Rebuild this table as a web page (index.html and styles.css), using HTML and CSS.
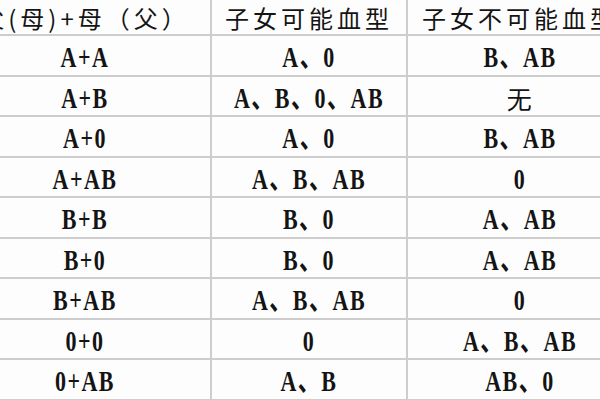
FILE: index.html
```html
<!DOCTYPE html>
<html lang="zh">
<head>
<meta charset="utf-8">
<title>血型遗传表</title>
<link rel="stylesheet" href="styles.css">
</head>
<body>
<div class="table">
  <div class="cell head">父(母)+母（父）</div>
  <div class="cell head">子女可能血型</div>
  <div class="cell head">子女不可能血型</div>

  <div class="cell"><span>A+A</span></div><div class="cell"><span>A、0</span></div><div class="cell"><span>B、AB</span></div>
  <div class="cell"><span>A+B</span></div><div class="cell"><span>A、B、0、AB</span></div><div class="cell cjk">无</div>
  <div class="cell"><span>A+0</span></div><div class="cell"><span>A、0</span></div><div class="cell"><span>B、AB</span></div>
  <div class="cell"><span>A+AB</span></div><div class="cell"><span>A、B、AB</span></div><div class="cell"><span>0</span></div>
  <div class="cell"><span>B+B</span></div><div class="cell"><span>B、0</span></div><div class="cell"><span>A、AB</span></div>
  <div class="cell"><span>B+0</span></div><div class="cell"><span>B、0</span></div><div class="cell"><span>A、AB</span></div>
  <div class="cell"><span>B+AB</span></div><div class="cell"><span>A、B、AB</span></div><div class="cell"><span>0</span></div>
  <div class="cell"><span>0+0</span></div><div class="cell"><span>0</span></div><div class="cell"><span>A、B、AB</span></div>
  <div class="cell"><span>0+AB</span></div><div class="cell"><span>A、B</span></div><div class="cell"><span>AB、0</span></div>
</div>
</body>
</html>
```
FILE: styles.css
```css
html, body {
  margin: 0;
  padding: 0;
  background: #fdfdfd;
  overflow: hidden;
  width: 600px;
  height: 400px;
}

.table {
  margin-left: -40px;
  display: grid;
  grid-template-columns: 252px 196px 226px;
  grid-template-rows: 36px;
  grid-auto-rows: 40.5px;
  width: 674px;
}

.cell {
  box-sizing: border-box;
  display: flex;
  align-items: center;
  justify-content: center;
  border-bottom: 2px solid #cdcdcd;
  border-right: 2px solid #cdcdcd;
  color: #141414;
  font-family: "Liberation Serif", "Noto Sans CJK SC", serif;
  font-weight: bold;
  font-size: 22px;
  line-height: 24px;
  letter-spacing: 1.5px;
  white-space: nowrap;
  padding-top: 6px;
}

.cell span {
  display: inline-block;
  line-height: 24px;
  height: 24px;
  transform: scaleY(1.3);
}

.head {
  font-family: "Noto Sans CJK SC", sans-serif;
  font-weight: normal;
  font-size: 24px;
  line-height: normal;
  letter-spacing: 4px;
  padding-top: 0;
  padding-bottom: 0;
}

.cjk {
  font-family: "Noto Sans CJK SC", sans-serif;
  font-weight: normal;
  font-size: 25px;
  line-height: 28px;
  padding-top: 4px;
}
```
